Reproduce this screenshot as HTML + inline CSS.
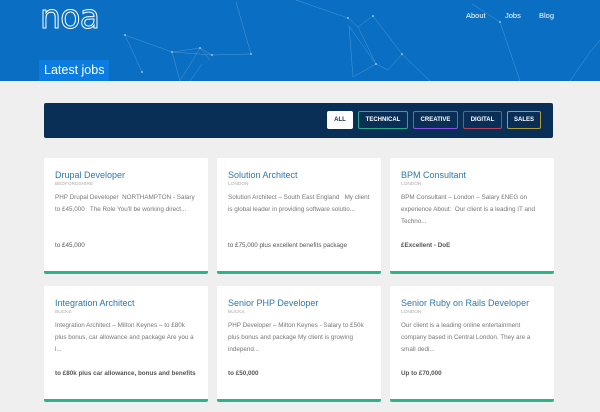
<!DOCTYPE html>
<html><head><meta charset="utf-8"><style>
*{margin:0;padding:0;box-sizing:border-box}
body{width:600px;height:412px;overflow:hidden;background:#efefef;font-family:"Liberation Sans",sans-serif;position:relative}
.hdr{position:absolute;left:0;top:0;width:600px;height:81px;background:#0a6fc2;overflow:hidden}
.nav a{position:absolute;top:11px;color:#fff;font-size:7.5px;text-decoration:none}
.lj{position:absolute;left:39px;top:60px;height:21px;padding:3px 5px;background:#0c7ce0;color:#fff;font-size:12.5px}
.bar{position:absolute;left:44px;top:103px;width:509px;height:35px;background:#0a2f57;border-radius:2px}
.b{position:absolute;top:8px;height:18px;font-size:6px;font-weight:bold;color:#fff;border:1px solid;border-radius:2px;text-align:center;line-height:16px}
.card{position:absolute;width:164px;height:116px;background:#fff;border-radius:2px;border-bottom:3px solid #2db38b;padding:11px 11px 0}
.card h3{font-weight:normal;font-size:9px;color:#2d78ad;margin-top:1px}
.card .loc{font-size:4.8px;color:#aaa;margin-top:2px}
.card p{font-size:6.3px;color:#777;line-height:12px;margin-top:5px;height:48px}
.card .s{position:absolute;left:11px;top:84px;font-size:6.3px;color:#555;font-weight:bold}
</style></head><body>
<div class="hdr">
<svg width="600" height="81" style="position:absolute;left:0;top:0" stroke="#6fa9e0" stroke-width="0.5" fill="none" opacity="0.7">
<path d="M125 35L172 52L200 48L212 55L251 54L236 2M125 35L142 72M172 52L180 81M200 48L210 60M200 48L180 81M172 52L212 55M296 0L348 18L358 27L373 16L402 54L388 70L376 64L349 26M358 27L376 64L353 77L349 26M402 54L430 81M472 4L500 22L520 81M590 52L570 81M590 52L600 40M202 64L190 81"/>
<g fill="#cfe4fa" stroke="none"><circle cx="125" cy="35" r="1"/><circle cx="172" cy="52" r="1"/><circle cx="200" cy="48" r="1"/><circle cx="212" cy="55" r="1"/><circle cx="251" cy="54" r="1"/><circle cx="348" cy="18" r="1"/><circle cx="373" cy="16" r="1"/><circle cx="402" cy="54" r="1"/><circle cx="376" cy="64" r="1"/><circle cx="500" cy="22" r="1"/><circle cx="142" cy="72" r="1"/></g></svg>
<svg width="80" height="40" style="position:absolute;left:36px;top:0"><text x="4" y="28" font-family="DejaVu Sans, sans-serif" font-size="33" textLength="60" lengthAdjust="spacing" fill="none" stroke="#fff" stroke-width="1">noa</text></svg>
<div class="nav"><a style="left:466px">About</a><a style="left:505px">Jobs</a><a style="left:539px">Blog</a></div>
<div class="lj">Latest jobs</div>
</div>
<div class="bar">
<div class="b" style="left:283px;width:26px;background:#fff;color:#0a2f57;border-color:#fff">ALL</div>
<div class="b" style="left:314px;width:50px;border-color:#2aa88a">TECHNICAL</div>
<div class="b" style="left:369px;width:45px;border-color:#8a4fe0">CREATIVE</div>
<div class="b" style="left:419px;width:39px;border-color:#b0455a">DIGITAL</div>
<div class="b" style="left:463px;width:34px;border-color:#b09a40">SALES</div>
</div>
<div class="card" style="left:44px;top:158px"><h3>Drupal Developer</h3><div class="loc">BEDFORDSHIRE</div><p>PHP Drupal Developer &nbsp;NORTHAMPTON - Salary to £45,000 &nbsp; The Role You'll be working direct...</p><div class="s" style="font-weight:normal">to £45,000</div></div>
<div class="card" style="left:217px;top:158px"><h3>Solution Architect</h3><div class="loc">LONDON</div><p>Solution Architect – South East England &nbsp; My client is global leader in providing software solutio...</p><div class="s" style="font-weight:normal">to £75,000 plus excellent benefits package</div></div>
<div class="card" style="left:390px;top:158px"><h3>BPM Consultant</h3><div class="loc">LONDON</div><p>BPM Consultant – London – Salary £NEG on experience About: &nbsp;Our client is a leading IT and Techno...</p><div class="s">£Excellent - DoE</div></div>
<div class="card" style="left:44px;top:286px"><h3>Integration Architect</h3><div class="loc">BUCKS</div><p>Integration Architect – Milton Keynes – to £80k plus bonus, car allowance and package Are you a l...</p><div class="s">to £80k plus car allowance, bonus and benefits</div></div>
<div class="card" style="left:217px;top:286px"><h3>Senior PHP Developer</h3><div class="loc">BUCKS</div><p>PHP Developer – Milton Keynes - Salary to £50k plus bonus and package My client is growing independ...</p><div class="s">to £50,000</div></div>
<div class="card" style="left:390px;top:286px"><h3>Senior Ruby on Rails Developer</h3><div class="loc">LONDON</div><p>Our client is a leading online entertainment company based in Central London. They are a small dedi...</p><div class="s">Up to £70,000</div></div>
</body></html>
